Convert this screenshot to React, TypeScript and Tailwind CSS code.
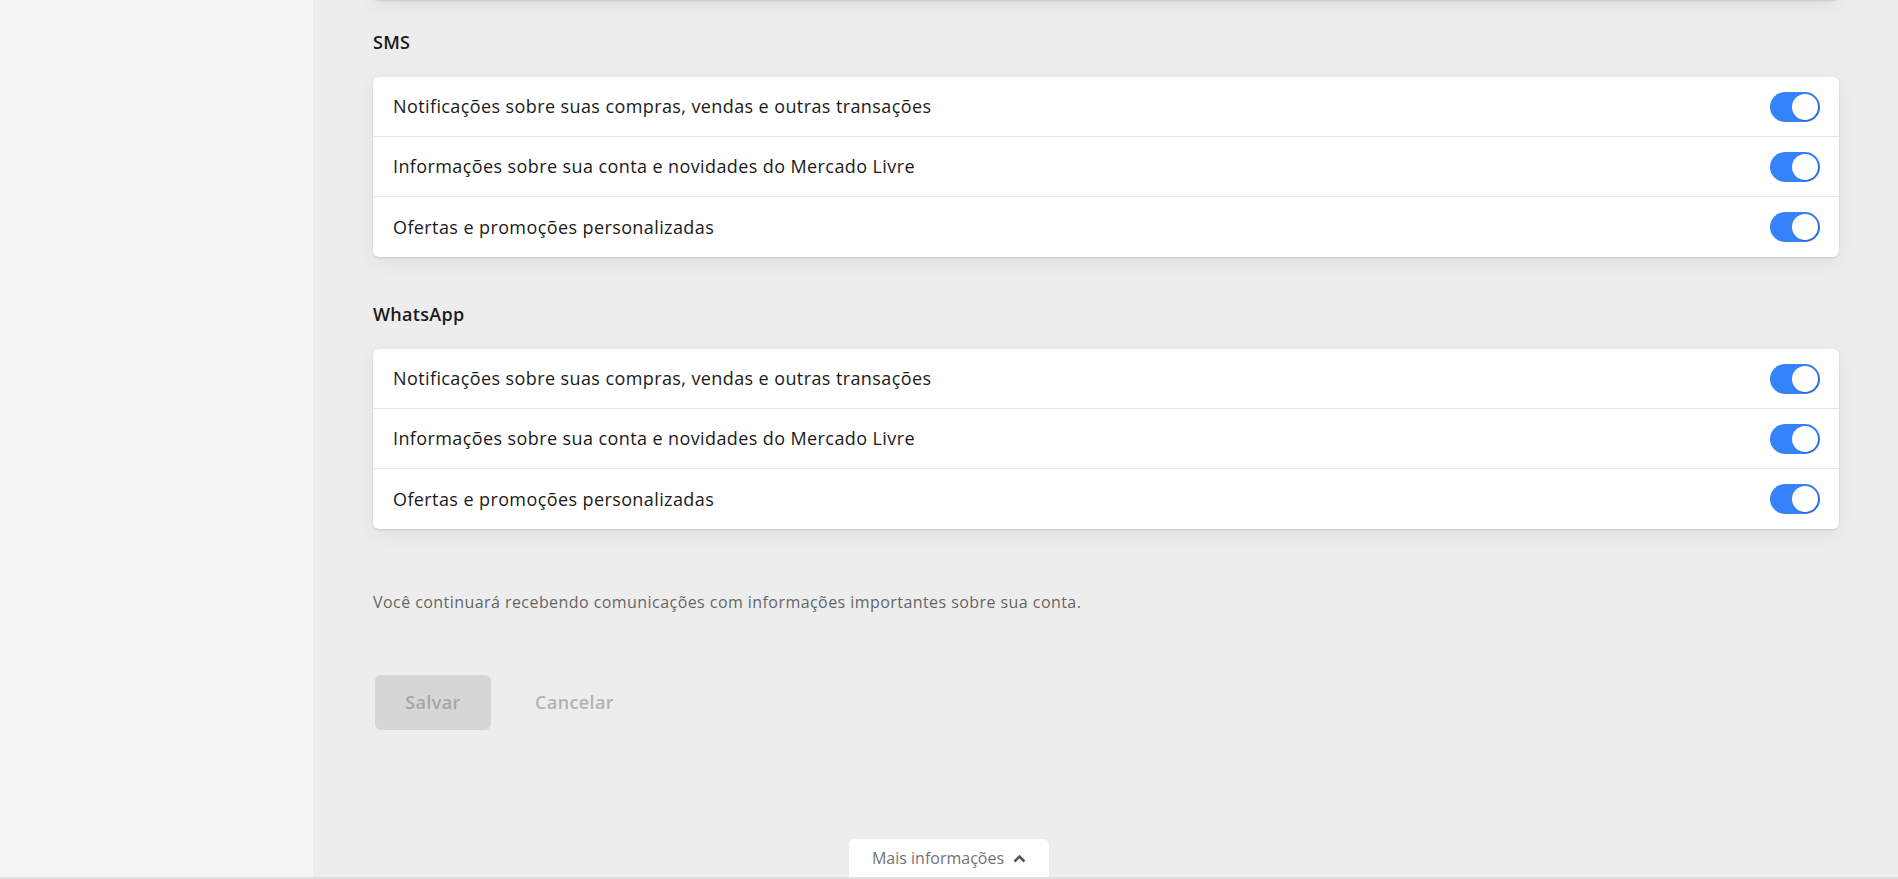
import { useState } from 'react';

const font = { fontFamily: '"Open Sans", "Noto Sans", sans-serif' };

const items = [
  'Notificações sobre suas compras, vendas e outras transações',
  'Informações sobre sua conta e novidades do Mercado Livre',
  'Ofertas e promoções personalizadas',
];

function Toggle({ on, onClick }: { on: boolean; onClick: () => void }) {
  return (
    <button
      onClick={onClick}
      className={`relative h-[30px] w-[50px] shrink-0 rounded-full transition-colors ${
        on ? 'bg-[#3483fa]' : 'bg-[#d5d5d5]'
      }`}
    >
      <span
        className={`absolute top-[2px] h-[26px] w-[26px] rounded-full bg-white shadow-[1px_1px_2px_rgba(30,60,120,0.45)] transition-all ${
          on ? 'left-[22px]' : 'left-[2px]'
        }`}
      />
    </button>
  );
}

function Channel({ title }: { title: string }) {
  const [values, setValues] = useState([true, true, true]);

  return (
    <section>
      <h2 className="text-[18px] font-semibold leading-[20px] tracking-[0.3px] text-[#1a1a1a]">{title}</h2>
      <div className="mt-[25px] divide-y divide-[#e6e6e6] rounded-md bg-white shadow-[0_1px_2px_rgba(0,0,0,0.12),0_6px_18px_rgba(0,0,0,0.06)]">
        {items.map((label, i) => (
          <div key={label} className="flex h-[60px] items-center justify-between pl-[20px] pr-[19px]">
            <span className="text-[18px] tracking-[0.4px] text-[#1a1a1a]">{label}</span>
            <Toggle
              on={values[i]}
              onClick={() => setValues(values.map((v, j) => (j === i ? !v : v)))}
            />
          </div>
        ))}
      </div>
    </section>
  );
}

export default function App() {
  return (
    <div style={font} className="relative flex h-screen flex-col overflow-hidden bg-[#ededed]">
      <div className="flex flex-1">
        <aside className="w-[313px] shrink-0 bg-[#f5f5f5]" />

        <main className="flex-1 pl-[60px] pr-[59px]">
          <div className="-mt-[40px] h-[40px] rounded-md bg-white shadow-[0_1px_2px_rgba(0,0,0,0.12),0_6px_18px_rgba(0,0,0,0.06)]" />

          <div className="mt-[32px]">
            <Channel title="SMS" />
          </div>
          <div className="mt-[47px]">
            <Channel title="WhatsApp" />
          </div>

          <p className="mt-[63px] text-[16px] leading-[20px] tracking-[0.44px] text-[#666666]">
            Você continuará recebendo comunicações com informações importantes sobre sua conta.
          </p>

          <div className="mt-[63px] ml-[2px] flex items-center gap-[12px]">
            <button
              disabled
              className="h-[55px] w-[116px] rounded-md bg-[#d6d6d6] text-[18px] font-semibold tracking-[0.4px] text-[#a6a6a6]"
            >
              Salvar
            </button>
            <button className="h-[55px] px-[32px] text-[18px] font-semibold tracking-[0.4px] text-[#b3b3b3]">
              Cancelar
            </button>
          </div>
        </main>
      </div>

      <div className="h-[2px] bg-[#e0e0e0]" />

      <button className="absolute bottom-[2px] left-1/2 flex h-[38px] w-[200px] -translate-x-1/2 items-center justify-center gap-[9px] rounded-t-md bg-white text-[16px] text-[#737373]">
        Mais informações
        <svg width="13" height="9" viewBox="0 0 13 9" fill="none">
          <path d="M1.5 7.5 6.5 2.5l5 5" stroke="#555" strokeWidth="2.6" />
        </svg>
      </button>
    </div>
  );
}
